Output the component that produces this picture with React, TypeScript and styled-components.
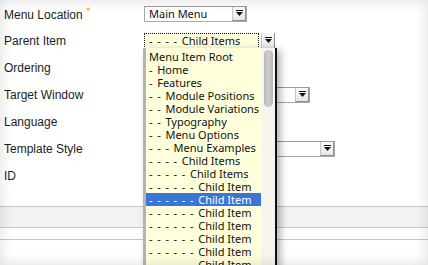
import React from 'react'
import styled, { createGlobalStyle, css } from 'styled-components'

const GlobalStyle = createGlobalStyle`
  html, body {
    margin: 0;
    padding: 0;
    background: #ffffff;
    overflow: hidden;
  }
`

const listFont = `"Noto Sans", "DejaVu Sans", sans-serif`

const parentOptions = [
  { depth: 0, label: 'Menu Item Root' },
  { depth: 1, label: 'Home' },
  { depth: 1, label: 'Features' },
  { depth: 2, label: 'Module Positions' },
  { depth: 2, label: 'Module Variations' },
  { depth: 2, label: 'Typography' },
  { depth: 2, label: 'Menu Options' },
  { depth: 3, label: 'Menu Examples' },
  { depth: 4, label: 'Child Items' },
  { depth: 5, label: 'Child Items' },
  { depth: 6, label: 'Child Item' },
  { depth: 6, label: 'Child Item', selected: true },
  { depth: 6, label: 'Child Item' },
  { depth: 6, label: 'Child Item' },
  { depth: 6, label: 'Child Item' },
  { depth: 6, label: 'Child Item' },
  { depth: 6, label: 'Child Item' },
  { depth: 6, label: 'Child Item' },
]

const dashes = (depth: number) => (depth ? '- '.repeat(depth) : '')

const ArrowIcon = () => (
  <svg width="7" height="6" viewBox="0 0 7 6" aria-hidden="true">
    <rect x="0" y="0" width="7" height="1" fill="#111" />
    <polygon points="0,2 7,2 3.5,6" fill="#111" />
  </svg>
)

type SelectProps = { width: number; value?: string; depth?: number; focused?: boolean }

const Select = ({ width, value = '', depth = 0, focused }: SelectProps) => (
  <SelectBox $width={width} $focused={focused}>
    <SelectValue $focused={focused}>
      <Dashes>{dashes(depth)}</Dashes>
      {value}
    </SelectValue>
    <ArrowButton>
      <ArrowIcon />
    </ArrowButton>
  </SelectBox>
)

const App = () => {
  return (
    <>
      <GlobalStyle />
      <Page>
        <Form>
          <Row>
            <Label>
              Menu Location <Required>*</Required>
            </Label>
            <Select width={103} value="Main Menu" />
          </Row>
          <Row>
            <Label>Parent Item</Label>
            <Select width={131} depth={4} value="Child Items" focused />
          </Row>
          <Row>
            <Label>Ordering</Label>
            <Select width={110} />
          </Row>
          <Row>
            <Label>Target Window</Label>
            <Select width={166} />
          </Row>
          <Row>
            <Label>Language</Label>
            <Select width={110} />
          </Row>
          <Row>
            <Label>Template Style</Label>
            <Select width={191} />
          </Row>
          <Row>
            <Label>ID</Label>
          </Row>
        </Form>

        <Footer>
          <Band />
          <Rule />
        </Footer>

        <DropdownList role="listbox">
          <Options>
            {parentOptions.map((opt, i) => (
              <Option key={i} $selected={opt.selected}>
                <Dashes>{dashes(opt.depth)}</Dashes>
                {opt.label}
              </Option>
            ))}
          </Options>
          <ScrollTrack>
            <ScrollThumb />
          </ScrollTrack>
        </DropdownList>

        <Vignette aria-hidden="true" />
      </Page>
    </>
  )
}

const Page = styled.div`
  position: relative;
  width: 428px;
  height: 265px;
  overflow: hidden;
  background: #ffffff;
`

const Vignette = styled.div`
  position: absolute;
  inset: 0;
  pointer-events: none;
  box-shadow: inset 0 0 14px rgba(0, 0, 0, 0.14);
`

const Form = styled.div`
  display: flex;
  flex-direction: column;
`

const Row = styled.div`
  display: grid;
  grid-template-columns: 144px 1fr;
  align-items: center;
  height: 27px;
`

const Label = styled.span`
  padding-left: 4px;
  font-family: 'Liberation Sans', Arial, sans-serif;
  font-size: 12px;
  color: #1c1c1c;
`

const Required = styled.span`
  color: #f3a33c;
  font-size: 11px;
  vertical-align: 4px;
`

const SelectBox = styled.div<{ $width: number; $focused?: boolean }>`
  display: flex;
  box-sizing: border-box;
  width: ${({ $width }) => $width}px;
  height: 16px;
  border: 1px solid #a9a9a9;
  border-top-color: #9a9a9a;
  background: #ffffff;

  ${({ $focused }) =>
    $focused &&
    css`
      border: none;
      background: transparent;
    `}
`

const SelectValue = styled.span<{ $focused?: boolean }>`
  flex: 1;
  box-sizing: border-box;
  padding-left: 4px;
  font-family: ${listFont};
  font-size: 11px;
  line-height: 14px;
  color: #111;
  white-space: pre;
  overflow: hidden;

  ${({ $focused }) =>
    $focused &&
    css`
      background: #ffffdc;
      outline: 1px dotted #111;
      outline-offset: -1px;
      padding-left: 5px;
      line-height: 16px;
      margin-right: 2px;
    `}
`

const Dashes = styled.span`
  letter-spacing: 0.9px;
`

const ArrowButton = styled.span`
  display: flex;
  align-items: center;
  justify-content: center;
  box-sizing: border-box;
  width: 14px;
  background: linear-gradient(#fbfbfb, #e6e6e6);
  border-left: 1px solid #c4c4c4;
  border-right: 1px solid #8c8c8c;
  border-bottom: 1px solid #8c8c8c;
  padding-bottom: 1px;
`

const Footer = styled.div`
  margin-top: 17px;
`

const Band = styled.div`
  height: 20px;
  background: #f2f2f2;
  border-top: 1px solid #c6c6c6;
  border-bottom: 1px solid #c6c6c6;
`

const Rule = styled.div`
  margin-top: 11px;
  border-top: 1px solid #c6c6c6;
`

const DropdownList = styled.div`
  position: absolute;
  left: 143px;
  top: 48px;
  width: 134px;
  height: 240px;
  box-sizing: border-box;
  display: flex;
  background: #ffffdc;
  border-left: 3px solid #b4b4b4;
  border-right: 2px solid #111;
  box-shadow: 4px 2px 7px rgba(0, 0, 0, 0.28);
`

const Options = styled.div`
  flex: 1;
  padding-top: 2px;
  display: flex;
  flex-direction: column;
`

const Option = styled.div<{ $selected?: boolean }>`
  height: 13px;
  padding-left: 3px;
  font-family: ${listFont};
  font-size: 11px;
  line-height: 13px;
  white-space: pre;
  color: #111;

  ${({ $selected }) =>
    $selected &&
    css`
      background: #3875d7;
      color: #ffffff;
    `}
`

const ScrollTrack = styled.div`
  width: 14px;
  padding: 2px 2px 0 3px;
  box-sizing: border-box;
  background: #f6f6ef;
`

const ScrollThumb = styled.div`
  height: 57px;
  border-radius: 5px;
  background: linear-gradient(90deg, #b9b9b9, #cdcdcd 50%, #b9b9b9);
`

export default App
